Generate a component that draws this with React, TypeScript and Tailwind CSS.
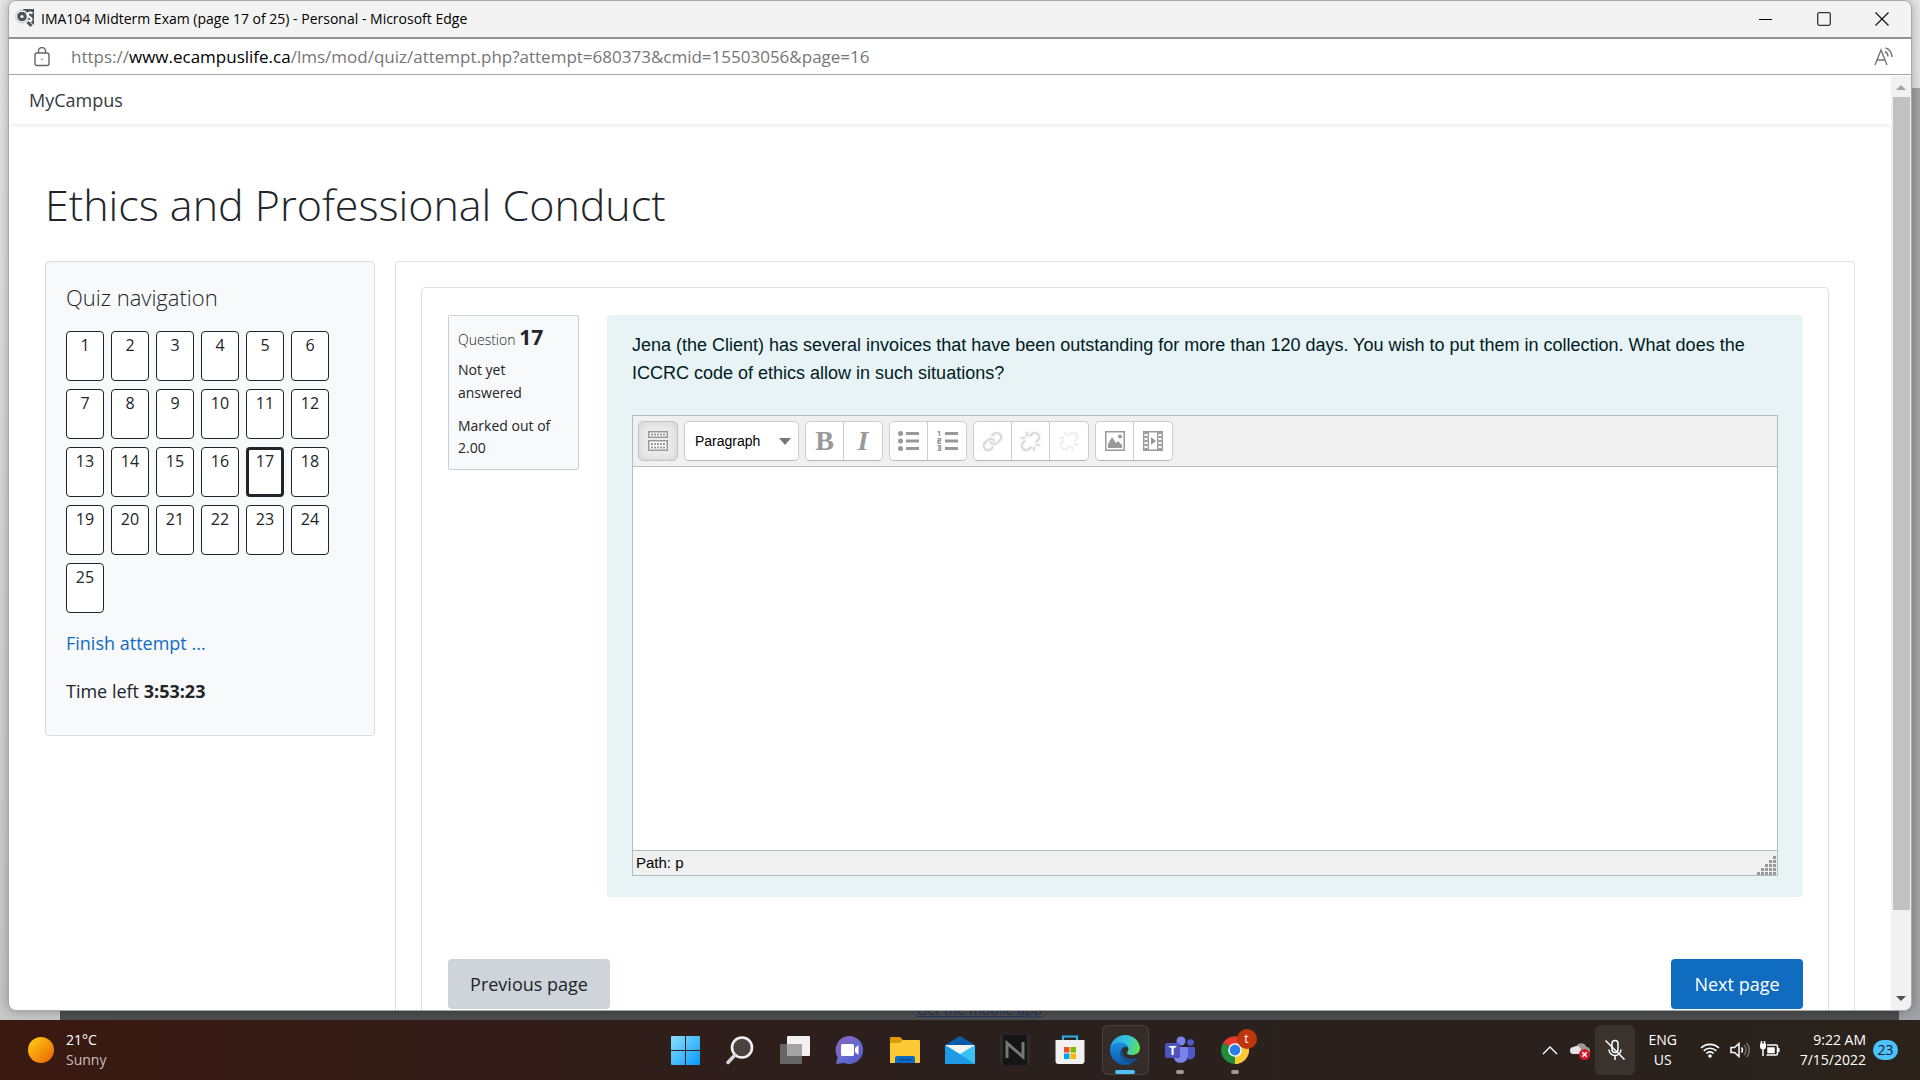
import type { ReactNode } from "react";
import clsx from "clsx";
import { Link, Unlink } from "lucide-react";

const questions = Array.from({ length: 25 }, (_, i) => i + 1);
const currentQuestion = 17;

const TitleBar = () => (
  <div className="flex h-9 shrink-0 items-center bg-[#f3f3f3] pl-[6px]">
    <svg className="h-5 w-5" viewBox="0 0 20 20">
      <path d="M8 0h11v16L12 10z" fill="#4a545c" />
      <circle cx="7" cy="7.500" r="6.300" fill="#fff" stroke="#b9bdc0" />
      <circle cx="7" cy="7.500" r="3.200" fill="none" stroke="#4a545c" strokeWidth="3.200" />
      <path d="M17.500 4.500c-2.500-2-6-.5-4.500 2 1 1.800 4.500 2 3.500 4.500-.7 1.500-2.500 1-3.500.5" stroke="#fff" strokeWidth="2" fill="none" />
      <path d="M12.500 13l4 4" stroke="#4a545c" strokeWidth="3" />
    </svg>
    <span className="ml-[6px] flex-1 text-sm text-black">
      IMA104 Midterm Exam (page 17 of 25) - Personal - Microsoft Edge
    </span>
    <button aria-label="Minimize" className="flex h-full w-[58px] items-center justify-center">
      <svg width="14" height="14"><path d="M0 7.500h13" stroke="#000" /></svg>
    </button>
    <button aria-label="Maximize" className="flex h-full w-[58px] items-center justify-center">
      <svg width="14" height="14"><rect x="0.700" y="0.700" width="12.600" height="12.600" rx="1.500" fill="none" stroke="#333" strokeWidth="1.300" /></svg>
    </button>
    <button aria-label="Close" className="flex h-full w-[58px] items-center justify-center">
      <svg width="14" height="14"><path d="M.5.500l13 13m0-13l-13 13" stroke="#111" strokeWidth="1.200" /></svg>
    </button>
  </div>
);

const AddressBar = () => (
  <div className="flex h-[38px] shrink-0 items-center border-t-2 border-b border-t-[#929292] border-b-[#a3a3a3] bg-white pr-[17px] pl-[25px]">
    <svg width="16" height="20" viewBox="0 0 16 20" fill="none" stroke="#666" strokeWidth="1.400">
      <rect x="1" y="6" width="14" height="12.500" rx="2" />
      <path d="M4.500 6V4a3.500 3.500 0 0 1 7 0v2" />
      <circle cx="8" cy="12.300" r=".8" fill="#666" stroke="none" />
    </svg>
    <div className="ml-[21px] flex-1 text-[17px] text-[#767676]">
      https://<span className="text-black">www.ecampuslife.ca</span>/lms/mod/quiz/attempt.php?attempt=680373&amp;cmid=15503056&amp;page=16
    </div>
    <button aria-label="Read aloud">
      <svg width="20" height="19" viewBox="0 0 20 19" fill="none" stroke="#767676" strokeWidth="1.400">
        <path d="M1 18L7 3l6 15M3 13h8" />
        <path d="M11 4.500c2 1 3 3 3 5M11.500 1c4 1 6.500 5 6.500 9" />
      </svg>
    </button>
  </div>
);

const ScrollBar = () => (
  <div className="mt-px flex w-5 shrink-0 flex-col items-center bg-[#f1f1f1]">
    <svg className="h-[21px] w-5 shrink-0" viewBox="0 0 20 21"><path d="M5 14l5-5 5 5z" fill="#a3a3a3" /></svg>
    <div className="w-[17px] flex-[814] bg-[#c1c1c1]" />
    <div className="flex-[79]" />
    <svg className="h-[21px] w-5 shrink-0" viewBox="0 0 20 21"><path d="M5 7l5 5 5-5z" fill="#505050" /></svg>
  </div>
);

const QuizNavigation = () => (
  <aside className="w-[330px] shrink-0 self-start rounded border border-[#dadcde] bg-[#f8f9fb] px-5 pt-[19px] pb-[14px]">
    <h2 className="text-[22px] leading-8 font-light">Quiz navigation</h2>
    <nav className="mt-[18px] flex flex-wrap gap-x-[7px] gap-y-2">
      {questions.map((n) => (
        <a
          key={n}
          href={`#q${n}`}
          className={clsx(
            "h-[50px] w-[38px] rounded border-[#212529] bg-white text-center text-base",
            n === currentQuestion ? "border-3 leading-[22px]" : "border leading-[26px]",
          )}
        >
          {n}
        </a>
      ))}
    </nav>
    <a href="#finish" className="mt-4 block text-lg leading-7 text-[#0f6cbf]">Finish attempt ...</a>
    <p className="mt-5 mb-4 text-lg leading-7">
      Time left <b>3:53:23</b>
    </p>
  </aside>
);

const ToolGroup = ({ children }: { children: ReactNode }) => (
  <div className="flex h-10 divide-x divide-[#ccc] rounded-[5px] border border-[#ccc] border-b-[#b5b5b5] bg-white">{children}</div>
);

const Tool = ({ label, children }: { label: string; children: ReactNode }) => (
  <button aria-label={label} className="flex w-[38px] items-center justify-center text-[#999]">
    {children}
  </button>
);

const Toolbar = () => (
  <div className="flex gap-[6px] border-b border-[#bbb] bg-[#f0f0f0] p-[5px]">
    <button aria-label="Toolbar toggle" className="flex h-10 w-10 items-center justify-center rounded-[5px] border border-[#c4c4c4] bg-[#ececec] shadow-[inset_0_0_8px_#ccc]">
      <svg width="20" height="20" fill="none" stroke="#999" strokeWidth="1.500">
        <rect x=".75" y=".75" width="18.500" height="5.500" fill="#fff" />
        <rect x=".75" y="9.750" width="18.500" height="9.500" fill="#fff" />
        <path d="M3 3.500h14M3 13h14M3 16.500h14" strokeWidth="2" strokeDasharray="2 1" />
      </svg>
    </button>
    <div className="relative">
      <select aria-label="Format" className="h-10 w-[115px] appearance-none rounded-[5px] border border-[#ccc] border-b-[#b5b5b5] bg-white pl-[10px] text-sm text-black">
        <option>Paragraph</option>
      </select>
      <svg className="pointer-events-none absolute top-[17px] right-2" width="12" height="7"><path d="M0 0h12L6 7z" fill="#777" /></svg>
    </div>
    <ToolGroup>
      <Tool label="Bold"><span className="font-['Liberation_Serif',serif] text-[28px] leading-8 font-bold">B</span></Tool>
      <Tool label="Italic"><span className="font-['Liberation_Serif',serif] text-[28px] leading-8 font-bold italic">I</span></Tool>
    </ToolGroup>
    <ToolGroup>
      <Tool label="Unordered list">
        <svg width="21" height="20" fill="#999">
          <circle cx="2.500" cy="2.500" r="2.500" /><circle cx="2.500" cy="10" r="2.500" /><circle cx="2.500" cy="17.500" r="2.500" />
          <path d="M8 1h13v3H8zM8 8.500h13v3H8zM8 16h13v3H8z" />
        </svg>
      </Tool>
      <Tool label="Ordered list">
        <svg width="21" height="20" fill="#999">
          <path d="M8 1h13v3H8zM8 8.500h13v3H8zM8 16h13v3H8z" />
          <path d="M.5.800h2V5M.5 7.800h3v2h-2.500v2.400H4M.5 14.800h3v4.400H.5M1 17h2" fill="none" stroke="#999" strokeWidth="1.400" />
        </svg>
      </Tool>
    </ToolGroup>
    <ToolGroup>
      <Tool label="Insert link"><Link size={21} color="#ddd" strokeWidth={3} /></Tool>
      <Tool label="Unlink"><Unlink size={21} color="#ddd" strokeWidth={3} /></Tool>
      <Tool label="Prevent automatic linking"><Unlink size={20} color="#efefef" strokeWidth={3} /></Tool>
    </ToolGroup>
    <ToolGroup>
      <Tool label="Image">
        <svg width="20" height="20" fill="#999">
          <path d="M.75.750h18.500v18.500H.75z" fill="none" stroke="#999" strokeWidth="1.500" />
          <path d="M3 17V13l4-7 4 6 2-2 4 4v3z" /><circle cx="15" cy="5.500" r="2" />
        </svg>
      </Tool>
      <Tool label="Media">
        <svg width="20" height="20" fill="none" stroke="#999">
          <path d="M.75.750h18.500v18.500H.75z" strokeWidth="1.500" />
          <path d="M3 1v18M17 1v18" strokeWidth="3" strokeDasharray="2 2" />
          <path d="M5.300 1v18M14.700 1v18" strokeWidth="1.400" />
          <path d="M8 6v8l5-4z" fill="#999" stroke="none" />
        </svg>
      </Tool>
    </ToolGroup>
  </div>
);

const Editor = () => (
  <div className="flex flex-col border border-[#b5bcbe] font-['Liberation_Sans',sans-serif]">
    <Toolbar />
    <textarea aria-label="Answer text" className="h-[383px] resize-none bg-white p-2 text-base outline-none" />
    <div className="flex h-[25px] items-center justify-between border-t border-[#b5bcbe] bg-[#f0f0f0] pl-[3px] text-[15px] text-black">
      <span>Path: p</span>
      <svg className="self-end" width="20" height="19" fill="#999">
        {[0, 1, 2, 3, 4].map((row) =>
          Array.from({ length: row + 1 }, (_, i) => (
            <rect key={`${row}-${i}`} x={16 - i * 4} y={row * 4} width="3" height="3" />
          )),
        )}
      </svg>
    </div>
  </div>
);

const Question = () => (
  <div className="flex items-start gap-7">
    <div className="w-[131px] shrink-0 rounded-xs border border-[#cad0d7] bg-[#f8f9fa] px-[9px] pt-[5px] pb-[10px] text-sm leading-[22px]">
      <h3 className="leading-8 font-light">
        Question <span className="text-[21px] font-bold">17</span>
      </h3>
      <p className="mt-[2px] leading-[23px]">Not yet<br />answered</p>
      <p className="mt-[11px]">Marked out of<br />2.00</p>
    </div>
    <div className="min-w-0 flex-1 rounded bg-[#e7f3f5] px-[25px] pt-4 pb-[21px]">
      <p className="font-['Liberation_Sans',sans-serif] text-[18px] leading-7 text-[#001a1e]">
        Jena (the Client) has several invoices that have been outstanding for more than 120 days. You wish to put them in
        collection. What does the ICCRC code of ethics allow in such situations?
      </p>
      <div className="mt-7">
        <Editor />
      </div>
    </div>
  </div>
);

const BrowserWindow = () => (
  <div className="relative flex min-h-0 flex-1 flex-col overflow-hidden rounded-lg border border-[#a8a8a8] bg-white shadow-[0_0_12px_rgba(0,0,0,0.3)]">
    <TitleBar />
    <AddressBar />
    <div className="flex min-h-0 flex-1">
      <div className="min-w-0 flex-1 overflow-hidden text-[#212529]">
        <header className="flex h-[49px] items-center px-5 text-lg shadow-[0_2px_4px_rgba(0,0,0,0.08)]">
          <a href="#home" className="text-[#343a40]">MyCampus</a>
        </header>
        <h1 className="mt-[51px] px-9 text-[43px] leading-[60px] font-light">Ethics and Professional Conduct</h1>
        <div className="mt-[26px] flex gap-5 px-9">
          <QuizNavigation />
          <main className="min-w-0 flex-1 rounded border border-[#dee0e2] p-[25px]">
            <div className="rounded border border-[#dee0e2] pt-[27px] pr-[25px] pb-10 pl-[26px]">
              <Question />
              <div className="mt-[62px] flex justify-between text-lg">
                <button className="h-[50px] w-[162px] rounded bg-[#ced4da]">Previous page</button>
                <button className="h-[50px] w-[132px] rounded bg-[#0f6cbf] text-white">Next page</button>
              </div>
            </div>
          </main>
        </div>
      </div>
      <ScrollBar />
    </div>
  </div>
);

/* page that sits behind the exam window */
const Backdrop = () => (
  <div className="absolute inset-0 flex flex-col bg-linear-to-b from-[#e8e8e8] to-[#c8c8c8]">
    <div className="mt-[88px] w-5 flex-1 self-end bg-[#a0a3a7]" />
    <div className="flex h-5">
      <div className="w-[60px]" />
      <div className="flex flex-1 items-end justify-center bg-[#4d4e50] text-sm leading-5">
        <a href="#app" className="text-[#23365f] underline">Get the mobile app</a>
      </div>
      <div className="w-[21px] bg-[#a0a3a7]" />
    </div>
  </div>
);

const StartIcon = () => (
  <svg width="29" height="29" viewBox="0 0 29 29">
    <defs>
      <linearGradient id="win" x1="0" y1="0" x2="1" y2="1">
        <stop offset="0" stopColor="#8be2ff" /><stop offset="1" stopColor="#0797fb" />
      </linearGradient>
    </defs>
    <path d="M0 1q0-1 1-1h13v14H0zM15 0h13q1 0 1 1v13H15zM0 15h14v14H1q-1 0-1-1zM15 15h14v13q0 1-1 1H15z" fill="url(#win)" />
  </svg>
);

const SearchIcon = () => (
  <svg width="28" height="29" viewBox="0 0 28 29" fill="none">
    <circle cx="16" cy="11.500" r="10" fill="#4b4240" stroke="#f2f2f2" strokeWidth="2.600" />
    <path d="M8.500 19.500L2 26.500" stroke="#d5d8dc" strokeWidth="3.400" strokeLinecap="round" />
  </svg>
);

const TaskViewIcon = () => (
  <svg width="30" height="29" viewBox="0 0 30 29">
    <rect x="7" y="0" width="23" height="20" rx="1" fill="#f1f1f1" />
    <rect x="0" y="8" width="22" height="20" rx="1" fill="#666" />
    <path d="M7 8h15v12H7z" fill="#a3a3a3" />
  </svg>
);

const ChatIcon = () => (
  <svg width="30" height="29" viewBox="0 0 30 29">
    <defs>
      <linearGradient id="chat" x1="0" y1="0" x2="1" y2="1">
        <stop offset="0" stopColor="#8f62b5" /><stop offset=".5" stopColor="#6a6bd0" /><stop offset="1" stopColor="#4d55c4" />
      </linearGradient>
    </defs>
    <path d="M15 0a14 14 0 1 1-6 27L1 28l1.500-7A14 14 0 0 1 15 0z" fill="url(#chat)" />
    <rect x="6" y="8" width="13" height="12" rx="1.500" fill="#fff" />
    <path d="M20 12l3.500-3v10L20 16z" fill="#fff" />
  </svg>
);

const FolderIcon = () => (
  <svg width="30" height="28" viewBox="0 0 30 28">
    <path d="M0 2q0-1 1-1h9l3 3v5H0z" fill="#dc9c06" />
    <path d="M0 7h10l3-3h16q1 0 1 1v21q0 1-1 1H0z" fill="#fdc935" />
    <path d="M5 27v-5q0-2 2-2h16q2 0 2 2v5z" fill="#0b6cc4" />
    <path d="M9 23.500h12" stroke="#064a94" strokeWidth="1.500" />
  </svg>
);

const MailIcon = () => (
  <svg width="30" height="28" viewBox="0 0 30 28">
    <path d="M0 9L15 0l15 9v4H0z" fill="#0a5ca8" />
    <path d="M1 9h28v6L15 22 1 15z" fill="#f4f4f4" />
    <path d="M0 9l15 9 15-9v19H0z" fill="#38c1f2" />
    <path d="M0 9l30 19H0z" fill="#1f9ae6" />
  </svg>
);

const NoteIcon = () => (
  <svg width="30" height="30" viewBox="0 0 30 30">
    <rect width="30" height="30" rx="3" fill="#2c2c2c" />
    <rect x="3" width="24" height="30" rx="1" fill="#151515" />
    <path d="M7 23V8l16 14V7" fill="none" stroke="#777" strokeWidth="3" />
  </svg>
);

const StoreIcon = () => (
  <svg width="30" height="30" viewBox="0 0 30 30">
    <path d="M8 6V1.500h14V6" fill="none" stroke="#2bb0ea" strokeWidth="2.200" />
    <path d="M.5 5h29v21q0 3-3 3h-23q-3 0-3-3z" fill="#f1f1f1" />
    <path d="M9 12h5.500v5.500H9z" fill="#f25022" />
    <path d="M15.500 12H21v5.500h-5.500z" fill="#7fba00" />
    <path d="M9 18.500h5.500V24H9z" fill="#00a4ef" />
    <path d="M15.500 18.500H21V24h-5.500z" fill="#ffb900" />
  </svg>
);

const EdgeIcon = () => (
  <svg width="30" height="30" viewBox="0 0 30 30">
    <defs>
      <linearGradient id="edgeTop" x1="0" y1=".4" x2="1" y2=".6">
        <stop offset="0" stopColor="#2aa5e6" /><stop offset=".55" stopColor="#33c6dc" /><stop offset="1" stopColor="#62e04c" />
      </linearGradient>
      <linearGradient id="edgeBody" x1="0" y1="0" x2="0" y2="1">
        <stop offset="0" stopColor="#1b8fe0" /><stop offset="1" stopColor="#0b59a8" />
      </linearGradient>
    </defs>
    <path d="M0 14C1 5 8 0 15 0c9 0 15 7 15 13 0 5-4 7-8 7-3 0-5-1-5-2s1.500-2 1.500-4.500C18 10 14 8 10 8 5 8 1 11 0 14z" fill="url(#edgeTop)" />
    <path d="M0 14c1-4 5-6.500 9.500-6.500 5 0 9 3 9 6-1-2-4-2.500-6-.5-4 4-1 12 5 14 2 1 4 1 6 0-3 2.500-6 3-8.500 3C6 30 0 23 0 15z" fill="url(#edgeBody)" />
    <path d="M12.500 13c-5 4-2 13 5 14.500 4 1 9-2 10.500-5-8 3.500-15 0-15.500-5-.1-2 0-3.500 0-4.500z" fill="#12508f" />
  </svg>
);

const TeamsIcon = () => (
  <svg width="30" height="28" viewBox="0 0 30 28">
    <circle cx="25.500" cy="6.500" r="3.300" fill="#5059c9" />
    <path d="M20 11h9q1 0 1 1v7a5 5 0 0 1-7 4z" fill="#5059c9" />
    <circle cx="16" cy="5" r="4.500" fill="#7b83eb" />
    <path d="M10 11h12q1 0 1 1v8a7.500 7.500 0 0 1-14 3z" fill="#7b83eb" />
    <rect x="0" y="7" width="15" height="15" rx="1.500" fill="#4b53bc" />
    <text x="7.500" y="19" textAnchor="middle" fontSize="13" fontWeight="bold" fill="#fff">T</text>
  </svg>
);

const ChromeIcon = () => (
  <svg width="30" height="30" viewBox="0 0 30 30">
    <path d="M15 15L3 8.100A14 14 0 0 1 27.100 8z" fill="#e33b2e" />
    <path d="M15 15l12.100-7A14 14 0 0 1 15 29z" fill="#fcc934" />
    <path d="M15 15v14A14 14 0 0 1 2.900 8z" fill="#1e8e3e" />
    <path d="M15 8.500h12.400A14 14 0 0 1 15 29l5.800-10.500z" fill="#fcc934" />
    <circle cx="15" cy="15" r="6.800" fill="#fff" />
    <circle cx="15" cy="15" r="5.400" fill="#2b7de9" />
  </svg>
);

const apps = [
  { name: "Start", icon: <StartIcon /> },
  { name: "Search", icon: <SearchIcon /> },
  { name: "Task view", icon: <TaskViewIcon /> },
  { name: "Chat", icon: <ChatIcon /> },
  { name: "File Explorer", icon: <FolderIcon /> },
  { name: "Mail", icon: <MailIcon /> },
  { name: "Notes", icon: <NoteIcon /> },
  { name: "Store", icon: <StoreIcon /> },
  { name: "Edge", icon: <EdgeIcon />, active: true },
  { name: "Teams", icon: <TeamsIcon />, open: true },
  { name: "Chrome", icon: <ChromeIcon />, open: true, badge: "t" },
];

const TrayIcons = () => (
  <div className="flex items-center gap-[10px]">
    <svg width="20" height="20" viewBox="0 0 20 20" fill="none" stroke="#fff" strokeWidth="1.700">
      <path d="M1 8a13 13 0 0 1 18 0M3.700 10.800a9 9 0 0 1 12.600 0M6.400 13.500a5 5 0 0 1 7.200 0" />
      <circle cx="10" cy="16" r="1.800" fill="#fff" stroke="none" />
    </svg>
    <svg width="20" height="20" viewBox="0 0 20 20" fill="none" stroke="#fff" strokeWidth="1.500">
      <path d="M1 7.500h3.500L9 3.500v13l-4.500-4H1z" />
      <path d="M11.500 7.500a4 4 0 0 1 0 5" />
      <path d="M14 5a7 7 0 0 1 0 10M16.500 3a10 10 0 0 1 0 14" stroke="#77706c" />
    </svg>
    <svg width="20" height="20" viewBox="0 0 20 20" fill="none" stroke="#fff" strokeWidth="1.500">
      <path d="M7 5h9q1.500 0 1.500 1.500v7q0 1.500-1.500 1.500H6.500M18.800 8v4" />
      <path d="M8 8h6v4.500H8z" fill="#fff" />
      <path d="M1.500 1v3M4.500 1v3M3 8v8" />
      <path d="M0 3.500h6v3a3 3 0 0 1-6 0z" fill="#fff" stroke="none" />
    </svg>
  </div>
);

const Taskbar = () => (
  <footer className="relative grid h-[60px] shrink-0 grid-cols-[1fr_auto_1fr] items-center bg-linear-to-r from-[#3a1911] via-[#2b201e] to-[#2a221b] text-sm text-white">
    <button className="flex items-center gap-3 pl-7 text-left">
      <span className="h-[26px] w-[26px] rounded-full bg-linear-to-br from-[#ffd012] to-[#e75d05]" />
      <span className="leading-5">
        21°C<br /><span className="text-[#c9bfbc]">Sunny</span>
      </span>
    </button>
    <div className="flex">
      {apps.map((app) => (
        <button key={app.name} aria-label={app.name} className="relative flex h-[60px] w-[55px] items-center justify-center">
          {app.active && <span className="absolute inset-x-1 inset-y-[5px] rounded-md border border-white/10 bg-white/5" />}
          <span className="relative">{app.icon}</span>
          {app.active && <span className="absolute bottom-[6px] h-1 w-5 rounded-full bg-[#4cc2ff]" />}
          {app.open && <span className="absolute bottom-[6px] h-1 w-2 rounded-full bg-[#a09a97]" />}
          {app.badge && (
            <span className="absolute top-[9px] right-[6px] flex h-5 w-5 items-center justify-center rounded-full bg-[#bf360c] text-xs leading-none">
              {app.badge}
            </span>
          )}
        </button>
      ))}
    </div>
    <div className="flex items-center justify-end pr-[22px]">
      <button aria-label="Hidden icons" className="mr-3">
        <svg width="16" height="10" viewBox="0 0 16 10"><path d="M1 9l7-7 7 7" fill="none" stroke="#fff" strokeWidth="1.400" /></svg>
      </button>
      <svg className="mr-[5px]" width="20" height="20" viewBox="0 0 20 20">
        <path d="M6 7a5.500 5.500 0 0 1 10.500 0 3.500 3.500 0 0 1 0 7H8z" fill="#9b9b9b" />
        <path d="M3.500 14a3.500 3.500 0 0 1 0-7 5 5 0 0 1 6 0l4 7z" fill="#e6e6e6" />
        <circle cx="14.500" cy="14.500" r="5.500" fill="#d9182b" />
        <path d="M12.300 12.300l4.400 4.400m0-4.400l-4.400 4.400" stroke="#fff" strokeWidth="1.600" />
      </svg>
      <button aria-label="Microphone muted" className="flex h-[50px] w-10 items-center justify-center rounded-md bg-white/8">
        <svg width="22" height="22" viewBox="0 0 22 22" fill="none" stroke="#fff" strokeWidth="1.500">
          <rect x="8" y="1.500" width="6" height="12" rx="3" />
          <path d="M5 10.500a6 6 0 0 0 12 0M11 16.500V21M1.500 1.500l19 19" />
        </svg>
      </button>
      <button className="w-14 text-center leading-5">ENG<br />US</button>
      <div className="ml-[9px]">
        <TrayIcons />
      </div>
      <button className="ml-5 text-right leading-5">9:22 AM<br />7/15/2022</button>
      <span className="ml-[7px] flex h-5 w-[25px] items-center justify-center rounded-full bg-[#4cc2ff] text-sm leading-none text-[#10212c]">
        23
      </span>
    </div>
  </footer>
);

export default function App() {
  return (
    <div className="flex h-screen flex-col overflow-hidden font-['Open_Sans','Noto_Sans',sans-serif]">
      <div className="relative flex min-h-0 flex-1 flex-col px-2 pb-[9px]">
        <Backdrop />
        <BrowserWindow />
      </div>
      <Taskbar />
    </div>
  );
}
